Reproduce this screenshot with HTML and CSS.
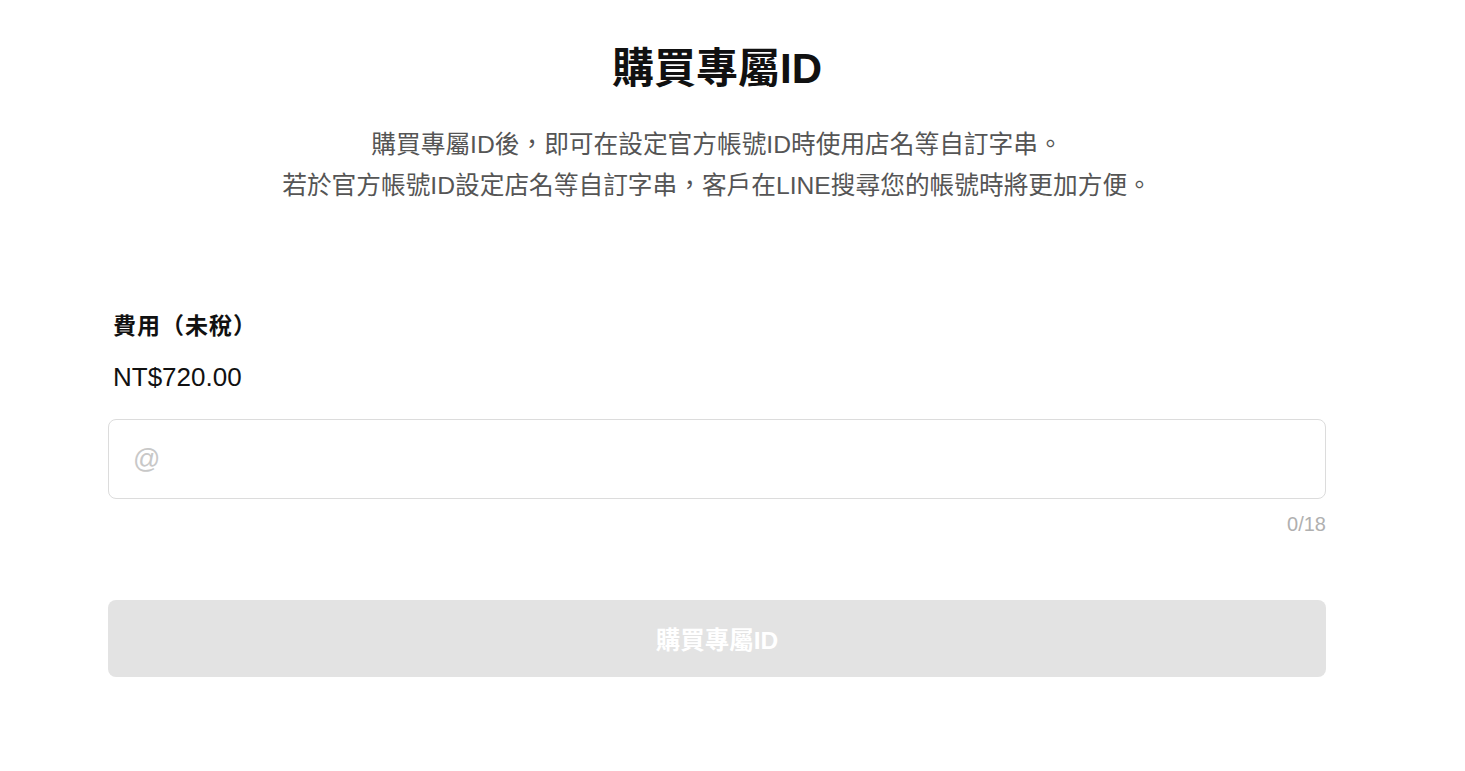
FILE: index.html
```html
<!DOCTYPE html>
<html lang="zh-Hant">
<head>
<meta charset="utf-8">
<title>購買專屬ID</title>
<link rel="stylesheet" href="styles.css">
</head>
<body>
<main class="page">
  <header class="intro">
    <h1 class="title">購買專屬ID</h1>
    <p class="desc">購買專屬ID後，即可在設定官方帳號ID時使用店名等自訂字串。<br>若於官方帳號ID設定店名等自訂字串，客戶在LINE搜尋您的帳號時將更加方便。</p>
  </header>
  <section class="form">
    <div class="fee-label">費用（未稅）</div>
    <div class="fee-value">NT$720.00</div>
    <div class="field">
      <input class="id-input" type="text" placeholder="@">
    </div>
    <div class="counter">0/18</div>
    <button class="buy-btn" type="button" disabled>購買專屬ID</button>
  </section>
</main>
</body>
</html>
```

FILE: styles.css
```css
* { box-sizing: border-box; }
html, body { margin: 0; padding: 0; background: #fff; }
body {
  font-family: "Liberation Sans", Arial, "Noto Sans CJK TC", sans-serif;
  color: #111;
}
.page {
  width: 1218px;
  margin-left: 108px;
  padding-top: 41px;
}
.intro { text-align: center; }
.title {
  margin: 0;
  font-size: 42px;
  line-height: 56px;
  font-weight: 700;
  color: #111;
}
.desc {
  margin: 27px 0 0;
  font-size: 24.7px;
  line-height: 41px;
  color: #555;
}
.form { margin-top: 105px; }
.fee-label {
  padding-left: 5px;
  font-size: 23px;
  letter-spacing: 1px;
  line-height: 30px;
  font-weight: 700;
  color: #111;
}
.fee-value {
  margin-top: 19px;
  padding-left: 5px;
  font-size: 26px;
  line-height: 34px;
  color: #111;
}
.field { margin-top: 25px; }
.id-input {
  display: block;
  width: 100%;
  height: 80px;
  border: 1px solid #dcdcdc;
  border-radius: 8px;
  padding: 0 24px;
  font-family: "Liberation Sans", Arial, sans-serif;
  font-size: 27px;
  color: #111;
  outline: none;
  background: #fff;
}
.id-input::placeholder { color: #c8c8c8; }
.counter {
  margin-top: 12px;
  text-align: right;
  font-size: 20px;
  line-height: 26px;
  color: #b0b0b0;
}
.buy-btn {
  display: block;
  width: 100%;
  height: 77px;
  margin-top: 63px;
  border: 0;
  border-radius: 8px;
  background: #e3e3e3;
  color: #fff;
  font-family: "Liberation Sans", Arial, "Noto Sans CJK TC", sans-serif;
  font-size: 24.5px;
  font-weight: 700;
  cursor: default;
}
```
